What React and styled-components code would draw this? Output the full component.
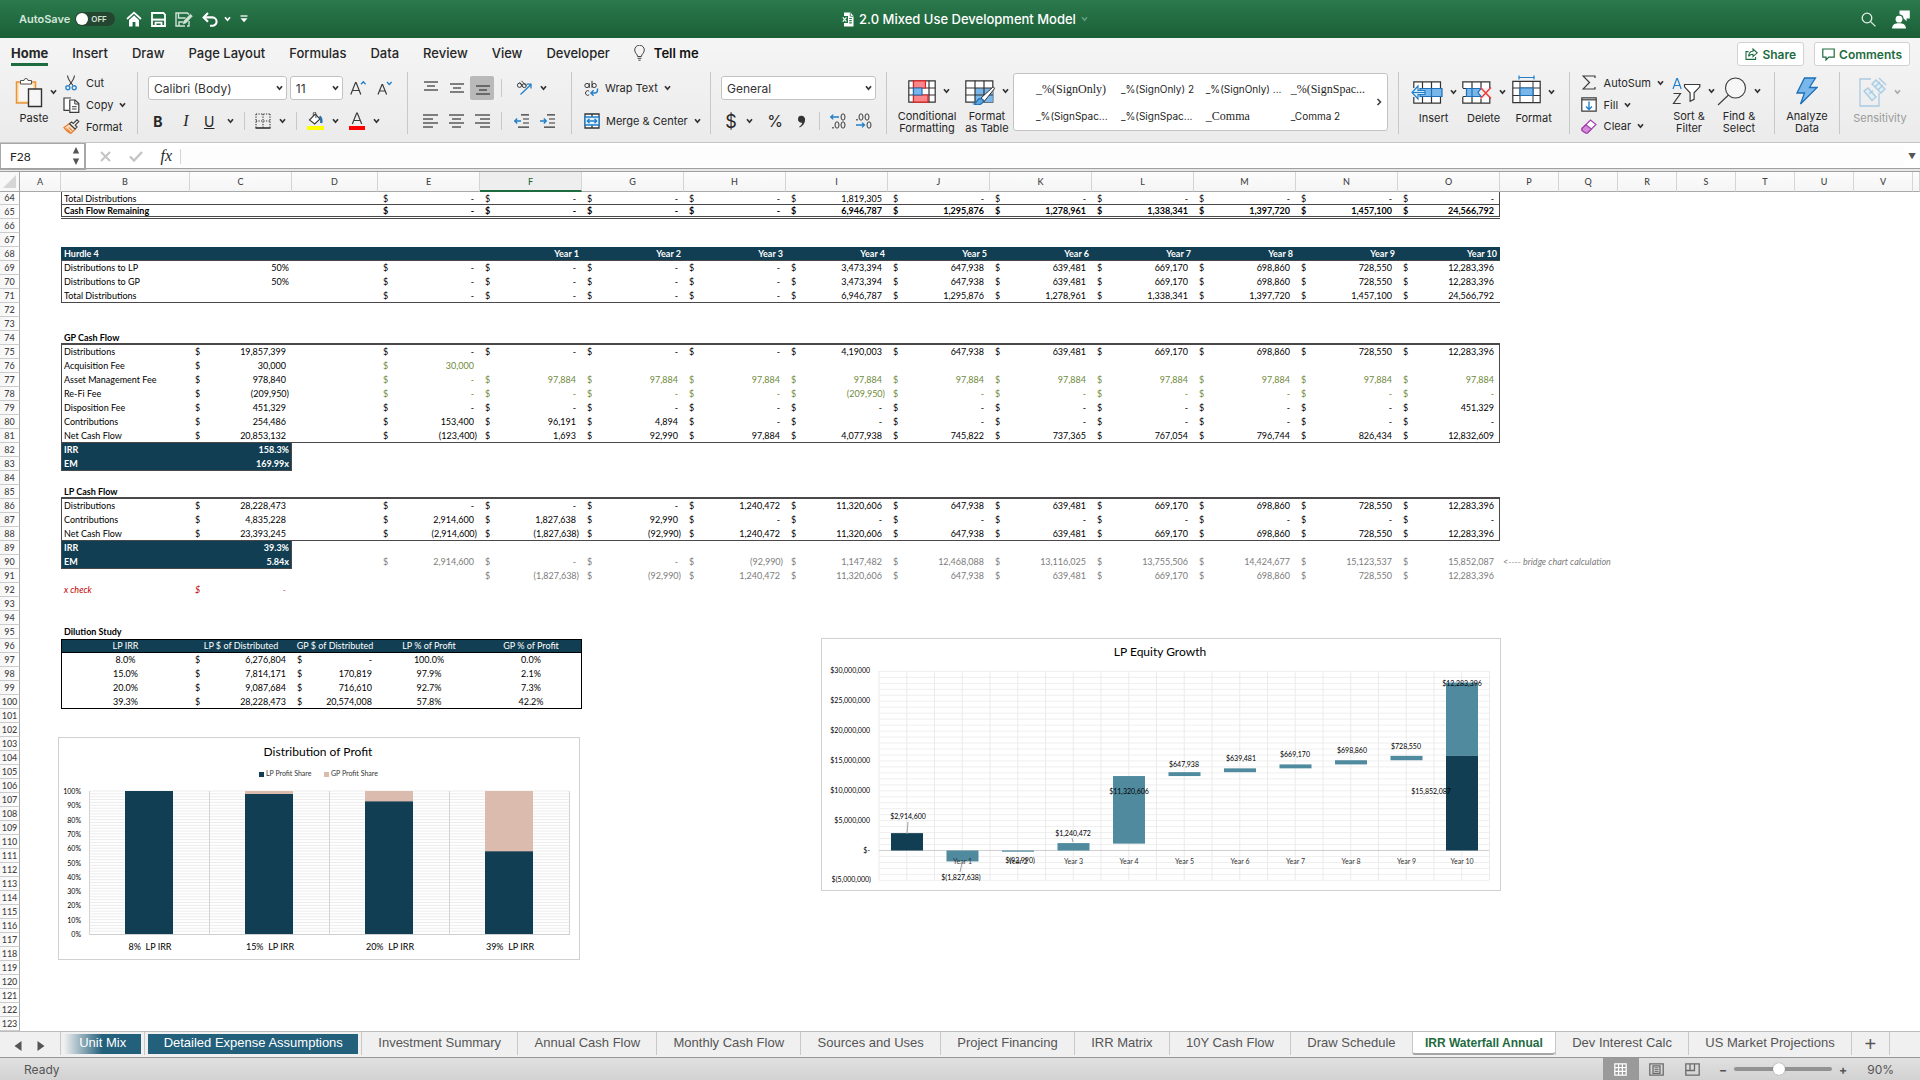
import { Fragment } from 'react';
import styled, { createGlobalStyle, css } from 'styled-components';

const NAVY = '#113e52';
const TEAL = '#4f8a9e';
const ROSE = '#dbbbae';
const GREEN = '#1e6b3f';
const LINE = '#4a4848';

const GlobalStyle = createGlobalStyle`
	* {
		box-sizing: border-box;
	}
	body {
		margin: 0;
		background: #ffffff;
		font-family: Inter, 'Liberation Sans', sans-serif;
		color: #262626;
	}
	button, input, select {
		font: inherit;
		color: inherit;
		margin: 0;
	}
	button {
		padding: 0;
		border: 0;
		background: none;
	}
`;

/* ---------- icons ---------- */

const Svg = ({ w, h, children, ...rest }) => (
	<svg
		width={w}
		height={h}
		viewBox={`0 0 ${w} ${h}`}
		fill="none"
		stroke="#3b3b3b"
		strokeWidth="1.2"
		aria-hidden="true"
		{...rest}
	>
		{children}
	</svg>
);

const Chevron = ({ color = '#333' }) => (
	<Svg w={7} h={6} stroke={color} strokeWidth="1.7">
		<path d="M1 1.2 3.5 4.2 6 1.2" />
	</Svg>
);

const HomeIcon = () => (
	<Svg w={16} h={16} stroke="#fff" strokeWidth="1.8">
		<path d="M1 8 8 1.6 15 8" />
		<path d="M3 9v6.5h3.6V11h2.8v4.5H13V9L8 4.4Z" fill="#fff" stroke="none" />
	</Svg>
);

const SaveIcon = () => (
	<Svg w={15} h={15} stroke="#fff" strokeWidth="1.8">
		<path d="M1 1h11.4L14 2.6V14H1Z" />
		<path d="M1 7.6h13" strokeWidth="2" />
		<path d="M4.5 14v-3.4h6V14" />
	</Svg>
);

const SaveAsIcon = () => (
	<Svg w={18} h={15} stroke="#cfe3d6" strokeWidth="1.4">
		<path d="M10 14H1V1h11.4L14 2.6M14 9v5h-2" />
		<path d="M3.5 1v5h7M4 14v-4h4" />
		<path d="M8 12 9 8.8 15.4 2.2 17.4 4.1 11 10.9Z" fill="#cfe3d6" strokeWidth="0.6" />
	</Svg>
);

const UndoIcon = () => (
	<Svg w={16} h={15} stroke="#fff" strokeWidth="2.1">
		<path d="M6 1 1.6 5.4 6 9.8" />
		<path d="M2 5.4h8.4a4 4 0 0 1 0 8.4H8" />
	</Svg>
);

const CustomizeIcon = () => (
	<Svg w={8} h={8} stroke="#fff" strokeWidth="1.3">
		<path d="M.5 1h7" />
		<path d="M.5 3.2h7L4 7.2Z" fill="#fff" stroke="none" />
	</Svg>
);

const FileIcon = () => (
	<Svg w={13} h={15} stroke="none">
		<path d="M3 .5h6.5L12.5 4v10.5H3Z" fill="#fff" />
		<path d="M9.3.8v3.5h3.2" stroke="#2a7a4d" strokeWidth="0.8" />
		<path d="M0 4h7v7H0Z" fill="#1f7244" />
		<path d="m1.8 5.4 3.6 4.2M5.4 5.4 1.8 9.6" stroke="#fff" strokeWidth="1.1" />
		<path d="M8.2 6.5h2.6M8.2 8.7h2.6M8.2 10.9h2.6" stroke="#2a7a4d" />
	</Svg>
);

const SearchIcon = () => (
	<Svg w={15} h={15} stroke="#e4efe8" strokeWidth="1.3">
		<circle cx="6" cy="6" r="4.8" />
		<path d="m9.6 9.6 4.8 4.8" />
	</Svg>
);

const PresenceIcon = () => (
	<Svg w={18} h={19} stroke="none" fill="#fff">
		<circle cx="7" cy="9.2" r="3.4" />
		<path d="M0 18.5c.4-4 3-5.2 7-5.2s6.6 1.2 7 5.2Z" />
		<path d="M7.5.5h10.3v8h-3.2v2.8l-3-2.8A4.6 4.6 0 0 0 7.5 4.3Z" />
	</Svg>
);

const BulbIcon = () => (
	<Svg w={11} h={16} stroke="#444" strokeWidth="1">
		<path d="M3.6 11.5c0-2.4-2.9-3.2-2.9-6.5a4.8 4.8 0 0 1 9.6 0c0 3.3-2.9 4.1-2.9 6.5Z" />
		<path d="M3.6 13.3h3.8M4.4 15.2h2.2" />
	</Svg>
);

const ShareIcon = () => (
	<Svg w={13} h={12} stroke={GREEN} strokeWidth="1.1">
		<path d="M3.5 3.6H1v7.8h9.6V9" />
		<path d="M8 1v2.3C5 3.3 3.8 5.4 3.6 8.4 4.7 6.6 6 6.2 8 6.2v2.4l4.2-3.8Z" />
	</Svg>
);

const CommentIcon = () => (
	<Svg w={13} h={13} stroke={GREEN} strokeWidth="1.2">
		<path d="M.8 1h11.4v8.2H6.8L4 12V9.2H.8Z" />
	</Svg>
);

const PasteIcon = () => (
	<Svg w={28} h={32}>
		<path d="M1.5 6h19v21h-19Z" fill="#fbe3b4" stroke="#e9923d" strokeWidth="1.5" />
		<path d="M4 8.5h14V25H4Z" fill="#f7f7f7" stroke="none" />
		<path d="M5.5 8V4.5H9a2 2 0 0 1 4 0h3.5V8Z" fill="#fff" stroke="#555" strokeWidth="1" />
		<path d="M13.5 13h13v17.5h-13Z" fill="#f6f6f6" stroke="#333" strokeWidth="1.4" />
	</Svg>
);

const CutIcon = () => (
	<Svg w={12} h={16} strokeWidth="1.1">
		<path d="M2.5.5c.3 3 2.2 6 5.5 10M9.5.5C9.2 3.5 7.3 6.5 4 10.5" />
		<circle cx="2.8" cy="12.8" r="2" stroke="#2f86cb" strokeWidth="1.4" />
		<circle cx="9.2" cy="12.8" r="2" stroke="#2f86cb" strokeWidth="1.4" />
	</Svg>
);

const CopyIcon = () => (
	<Svg w={17} h={16} strokeWidth="1.2">
		<path d="M6 13.3H1V1h7" fill="#fff" />
		<path d="M6.8 3H12l3.8 3.6v8.7h-9Z" fill="#fff" />
		<path d="M11.8 3v4h4M9 9.7h4.6M9 12h4.6" strokeWidth="1" />
	</Svg>
);

const BrushIcon = () => (
	<Svg w={17} h={15}>
		<path d="M1 8.5 6.5 4.7l5.7 5.5L8 14.3C5 13.4 3.5 11.8 1 8.5Z" fill="#fce0c2" stroke="#e8833a" strokeWidth="1.3" />
		<path d="m3.5 9.5 4 4M5.800 8.300l3.600 3.600" stroke="#e8833a" />
		<path d="m6.500 4.700 2-1.700 1.800 1.500L14 .8l1.800 1.700-3.600 3.700 1.800 1.900-1.900 1.900Z" fill="#f5f5f5" stroke="#444" />
	</Svg>
);

const FontGrowIcon = ({ down }) => (
	<Svg w={16} h={16} strokeWidth="1.2">
		{down ? (
			<path d="m1 14.5 4-10h.6l4 10M2.6 11h5.6" />
		) : (
			<path d="M.8 14.5 5.500 2.600h.6l4.700 11.900M2.500 10.500H9" />
		)}
		<path d={down ? 'm10 2 2.300 2.500L14.600 2' : 'M11 4.200 13.300 1.700l2.300 2.500'} stroke="#1f7fcb" strokeWidth="1.3" />
	</Svg>
);

const BordersIcon = () => (
	<Svg w={16} h={16} stroke="#333" strokeWidth="1.1">
		<path d="M1 1h14M1 1v14M15 1v14M8 1v14M1 8h14" strokeDasharray="1.2 1.3" />
		<path d="M.5 15h15" strokeWidth="1.6" />
	</Svg>
);

const FillIcon = () => (
	<Svg w={17} h={18}>
		<path d="m2.500 8 5.800-6 4.700 5-5.300 5Z" fill="#fff" strokeWidth="1.1" />
		<path d="M6.300 4V1.500a1.300 1.300 0 0 1 2.600 0V6" strokeWidth="0.9" />
		<path d="M12.500 4.500c2 1.500 2.200 3.800 1.600 6.500" stroke="#2a6fa8" strokeWidth="2.4" />
		<path d="M0 14h17v4H0Z" fill="#ffff00" stroke="none" />
	</Svg>
);

const FontColorIcon = () => (
	<Svg w={16} h={18}>
		<path d="M3.300 12 7.700 1h.6l4.400 11M5 8.500h6" />
		<path d="M0 14h16v4H0Z" fill="#ff0000" stroke="none" />
	</Svg>
);

// lines: [x1, x2, y] triples
const LinesIcon = ({ lines }) => (
	<Svg w={15} h={14} stroke="#333" strokeWidth="1.2">
		{lines.map(([a, b, y]) => (
			<path key={y} d={`M${a} ${y}H${b}`} />
		))}
	</Svg>
);

const OrientationIcon = () => (
	<Svg w={16} h={16} strokeWidth="1">
		<circle cx="3.5" cy="5.3" r="2.1" />
		<path d="M3.600 2.200 6.400 6.400M5.500.8l4.600 5" />
		<circle cx="8.3" cy="5.6" r="2" />
		<path d="M4.500 14.500 15 4.500M10.800 4.200H15v4.300" stroke="#1f7fcb" strokeWidth="1.3" />
	</Svg>
);

const IndentIcon = ({ right }) => (
	<Svg w={15} h={14} stroke="#333">
		<path d="M7 .8h8M9 5h6M9 9h6M4 13.200h11" />
		<path d={right ? 'M0 7h6M3.800 4.600 6.200 7 3.800 9.400' : 'M7 7H1M3.200 4.600.8 7l2.400 2.400'} stroke="#1f7fcb" strokeWidth="1.4" />
	</Svg>
);

const WrapIcon = () => (
	<Svg w={15} h={17} strokeWidth="1">
		<ellipse cx="3" cy="5.5" rx="2.2" ry="2.1" />
		<path d="M5.300 3.200v4.600M8 .8v7" />
		<ellipse cx="10.2" cy="5.5" rx="2.1" ry="2.1" />
		<path d="M5.200 11.200a2.300 2.300 0 1 0 0 3.600" />
		<path d="M13.500 8.500v1.800c0 1.600-1 2.700-2.700 2.700H7M9.600 10.300 6.900 13l2.700 2.800" stroke="#1f7fcb" strokeWidth="1.4" />
	</Svg>
);

const MergeIcon = () => (
	<Svg w={16} h={16} stroke="#333" strokeWidth="1.3">
		<path d="M1 1h14v14H1ZM8 1v3M8 12v3" fill="#fff" />
		<path d="M1 4h14v8H1Z" fill="#e3f1fb" stroke="#1f7fcb" />
		<path d="M3.500 8h9M5.500 5.800 3.300 8l2.200 2.200M10.500 5.800 12.700 8l-2.200 2.200" stroke="#1f7fcb" />
	</Svg>
);

const CommaIcon = () => (
	<Svg w={9} h={13} stroke="none" fill="#333">
		<path d="M4.500.8a3.500 3.500 0 0 1 3.600 3.800c0 3.600-2 6.600-5.400 7.800l-.4-.8c1.800-1 2.800-2.300 2.900-3.800C2.600 8 1 6.300 1 4.200A3.400 3.400 0 0 1 4.500.8Z" />
	</Svg>
);

const ConditionalIcon = () => (
	<Svg w={28} h={23} stroke="#333" strokeWidth="1.2">
		<path d="M.8.8h26.400v21.400H.8Z" fill="#fff" />
		<path d="M.8 8h26.400M.8 15h26.400M5.500.8v21.400M21 .8v21.400" />
		<path d="M5.500.8h12V8h-12ZM5.500 15H20v7.200H5.500Z" fill="#f9868a" stroke="#d22" />
		<path d="M5.500 8H14v7H5.500Z" fill="#79b7ea" stroke="#1c6fb8" />
	</Svg>
);

const TableFormatIcon = () => (
	<Svg w={30} h={28} stroke="#333" strokeWidth="1.2">
		<path d="M.8 3.800h27v21.400H.8Z" fill="#fff" />
		<path d="M10 11h17.800v14.200H10Z" fill="#79b7ea" stroke="none" />
		<path d="M.8 11h27M.8 18h27M10 3.800v21.400M19 3.800v21.400" />
		<path d="m16 21 11.500-10.500c1.200-.9 2.400.2 1.700 1.500L19.500 24Z" fill="#fff" strokeWidth="1" />
		<path d="M9 27c3-.5 2.500-5 6-5.300 3 .1 4 2.700 2.400 4.200-2 2-5.800 2.200-8.400 1.100Z" fill="#5fa6df" stroke="#1c6fb8" />
	</Svg>
);

const InsertIcon = () => (
	<Svg w={32} h={23} stroke="#333" strokeWidth="1.2">
		<path d="M2.800 7V.8h26.700V7M2.800 16v6.200h26.700V16M11.500.8v21.400M20.500.8v21.400" fill="#fff" />
		<path d="M9 7.500h22v8H9Z" fill="#79b7ea" stroke="#1c6fb8" />
		<path d="M20.500 7.500v8" stroke="#1c6fb8" />
		<path d="M7 5 1 11.500 7 18V13.500h7v-4H7Z" fill="#e3f1fb" stroke="#1f7fcb" strokeWidth="1.2" />
		<path d="M2 11.500h12" stroke="#1f7fcb" />
	</Svg>
);

const DeleteIcon = () => (
	<Svg w={30} h={23} stroke="#333" strokeWidth="1.2">
		<path d="M.8 7V.8h27V7M.8 16v6.200h27V16M10 .8v21.400M19 .8v6M19 18v4.200M.8 7.500h4M.8 15.500h4" fill="#fff" />
		<path d="M4.500 7.500H19l-3 4 3 4H4.500Z" fill="#79b7ea" stroke="#1c6fb8" />
		<path d="M10 7.500v8" stroke="#1c6fb8" />
		<path d="m18.500 6.500 10.500 11M29 6.500l-10.500 11" stroke="#ef3a3a" strokeWidth="1.5" />
	</Svg>
);

const CellFormatIcon = () => (
	<Svg w={29} h={34} stroke="#333" strokeWidth="1.2">
		<path d="M7 2.500h15M7 .5v4M22 .5v4" stroke="#1f7fcb" />
		<path d="M.8 6.300h27.400v21.400H.8Z" fill="#fff" />
		<path d="M.8 13h27.400M.8 20.500h27.400M8 6.300v21.400M21 6.300v21.400" strokeWidth="1" />
		<path d="M8 13h13v7.500H8Z" fill="#79b7ea" stroke="#1c6fb8" />
	</Svg>
);

const SigmaIcon = () => (
	<Svg w={14} h={15}>
		<path d="M13 3V1H1l6.500 6.500L1 14h12v-2" />
	</Svg>
);

const FillDownIcon = () => (
	<Svg w={16} h={15}>
		<path d="M.8.8h14.400v13.400H.8Z" fill="#fff" />
		<path d="M.8 2.800h14.400" />
		<path d="M8 4.500v7.800M5 9.400l3 3 3-3" stroke="#1f7fcb" strokeWidth="1.4" />
	</Svg>
);

const EraserIcon = () => (
	<Svg w={16} h={15} stroke="#a33fae">
		<path d="M1 9.500 9.500 1 15 5.500 6.500 14H4.500L1 11.500Z" fill="#fff" />
		<path d="M1 9.500 4.800 5.800 10.500 10 6.500 14H4.500L1 11.500Z" fill="#d28bd8" />
	</Svg>
);

const SortFilterIcon = () => (
	<Svg w={29} h={28}>
		<path d="M1 12 4.800 1.500h.6L9.200 12M2.300 8.500h5.600" stroke="#1f7fcb" />
		<path d="M1.500 16.500h7L1.500 26.500h7.200" />
		<path d="M12.500 7.500h15.300v2.300l-5.700 6v6.500l-4 2V15.800l-5.600-6Z" fill="#fff" />
	</Svg>
);

const FindIcon = () => (
	<Svg w={30} h={29} strokeWidth="1.1">
		<circle cx="18.5" cy="11" r="10" fill="#f6f6f6" />
		<path d="M11.500 18 1 28" />
	</Svg>
);

const BoltIcon = () => (
	<Svg w={22} h={28} stroke="#1c6fb8" strokeWidth="1.3">
		<path d="M8.500 1h11l-6 9.500h7.700L4.500 27l4-11H1Z" fill="#79b7ea" />
	</Svg>
);

const SensitivityIcon = () => (
	<Svg w={28} h={30} stroke="#a9cbe2" strokeWidth="1.3">
		<path d="M12 2H1v27h19V16" />
		<path d="m5 14 4-3 8 9-4 3.500ZM10 17l4-3.500" fill="#e2edf4" />
		<path d="m13 7 4-4 9 9-4 4ZM16 10l5-5M19 13l5-5M20 1l7 7" fill="#e2edf4" />
	</Svg>
);

const DecimalIcon = ({ right }) => (
	<Svg w={16} h={16} strokeWidth="1">
		{right ? (
			<>
				<circle cx="1" cy="6.8" r=".5" />
				<ellipse cx="5" cy="4" rx="2" ry="3.2" />
				<ellipse cx="11" cy="4" rx="2" ry="3.2" />
				<ellipse cx="13" cy="12" rx="2" ry="3.2" />
				<path d="M0 12h8.500M6 9.600 8.500 12 6 14.400" stroke="#1f7fcb" strokeWidth="1.3" />
			</>
		) : (
			<>
				<ellipse cx="13" cy="4" rx="2" ry="3.2" />
				<circle cx="3" cy="14.8" r=".5" />
				<ellipse cx="7" cy="12" rx="2" ry="3.2" />
				<ellipse cx="13" cy="12" rx="2" ry="3.2" />
				<path d="M9 4H.8M3.300 1.600.8 4l2.500 2.400" stroke="#1f7fcb" strokeWidth="1.3" />
			</>
		)}
	</Svg>
);

const GridViewIcon = () => (
	<Svg w={13} h={13} stroke="#fff">
		<path d="M.8.8h11.400v11.400H.8ZM4.600.8v11.400M8.400.8v11.400M.8 4.600h11.400M.8 8.400h11.400" />
	</Svg>
);

const PageViewIcon = () => (
	<Svg w={15} h={13} stroke="#6a6a6a" strokeWidth="1.3">
		<path d="M.8.8h13.400v11.400H.8ZM4 2.800h7v7.600H4Z" />
		<path d="M5.500 4.800h4M5.500 6.600h4M5.500 8.400h4" strokeWidth="1" />
	</Svg>
);

const BreakViewIcon = () => (
	<Svg w={15} h={13} stroke="#6a6a6a" strokeWidth="1.3">
		<path d="M.8.8h13.400v11.400H.8ZM.8 7.500h8.700V.8M5 .8v6.700" />
	</Svg>
);

/* ---------- title bar ---------- */

const TitleBar = styled.header`
	display: grid;
	grid-template-columns: 1fr auto 1fr;
	align-items: center;
	height: 38px;
	padding: 0 10px 0 19px;
	background: linear-gradient(#2b794d, #1b5f37);
	color: #ffffff;
`;

const QuickAccess = styled.div`
	display: flex;
	align-items: center;
	gap: 9px;
`;

const AutoSave = styled.label`
	display: flex;
	align-items: center;
	gap: 5px;
	margin-right: 2px;
	font-size: 11px;
	font-weight: 600;
	color: #d5e6db;
`;

const Toggle = styled.span`
	display: flex;
	align-items: center;
	gap: 3px;
	width: 40px;
	height: 14px;
	padding: 0 1px;
	border-radius: 7px;
	background: #24452f;
	font-size: 8px;
	color: #d5e6db;

	& input {
		appearance: none;
		width: 12px;
		height: 12px;
		border-radius: 6px;
		background: #ffffff;
	}
`;

const QuickButton = styled.button`
	display: flex;
	align-items: center;
	gap: 6px;
`;

const DocTitle = styled.h1`
	display: flex;
	align-items: center;
	gap: 5px;
	margin: 0;
	font-size: 13px;
	font-weight: 500;
`;

const TitleActions = styled.div`
	display: flex;
	justify-content: flex-end;
	align-items: center;
	gap: 16px;
`;

/* ---------- ribbon ---------- */

const RibbonPanel = styled.div`
	height: 105px;
	background: linear-gradient(#f5f5f5, #ebebeb);
	border-bottom: 1px solid #c4c4c4;
`;

const TabRow = styled.nav`
	display: flex;
	align-items: center;
	gap: 24px;
	height: 32px;
	padding: 0 10px 0 11px;
`;

const RibbonTab = styled.button`
	height: 24px;
	padding-top: 1px;
	border-bottom: 3px solid ${({ $active }) => ($active ? GREEN : 'transparent')};
	font-size: 13px;
	line-height: 16px;
	font-weight: ${({ $active }) => ($active ? 700 : 500)};
`;

const TellMe = styled.button`
	display: flex;
	align-items: center;
	gap: 9px;
	height: 24px;
	padding-bottom: 2px;
	font-size: 13px;
	font-weight: 600;
	color: #111111;
`;

const TabActions = styled.div`
	display: flex;
	gap: 10px;
	margin-left: auto;
`;

const ShareButton = styled.button`
	display: flex;
	align-items: center;
	gap: 4px;
	height: 24px;
	padding: 0 7px;
	border: 1px solid #d2d2d2;
	border-radius: 3px;
	background: #ffffff;
	font-size: 12px;
	font-weight: 600;
	color: ${GREEN};
`;

const Groups = styled.div`
	display: flex;
	height: 72px;
	padding-top: 2px;
`;

const Group = styled.div`
	display: flex;
	flex-shrink: 0;
	height: 62px;
	padding: 0 ${({ $pad = 10 }) => $pad}px;
	border-right: 1px solid #c8c8c8;

	&:last-child {
		border-right: 0;
	}
`;

const Stack = styled.div`
	display: flex;
	flex-direction: column;
	justify-content: space-between;
	width: ${({ $width }) => $width}px;
	padding: 4px 0 1px;
`;

const ToolRow = styled.div`
	display: flex;
	align-items: center;
	gap: ${({ $gap = 10 }) => $gap}px;
	height: 24px;
`;

const Tool = styled.button`
	display: flex;
	align-items: center;
	justify-content: center;
	gap: ${({ $gap = 0 }) => $gap}px;
	flex-shrink: 0;
	min-width: ${({ $min = 16 }) => $min}px;
	height: 24px;
	border-radius: 2px;
	background: ${({ $on }) => ($on ? '#b9b9b9' : 'transparent')};
	font-size: 11px;
	white-space: nowrap;
`;

const Glyph = styled.span`
	font-size: ${({ $size = 14 }) => $size}px;
	font-family: ${({ $font = 'inherit' }) => $font};
	font-weight: ${({ $weight = 400 }) => $weight};
	font-style: ${({ $italic }) => ($italic ? 'italic' : 'normal')};
	text-decoration: ${({ $underline }) => ($underline ? 'underline' : 'none')};
`;

const Rule = styled.span`
	width: 1px;
	height: 18px;
	margin: 0 ${({ $space = 0 }) => $space}px;
	background: #c8c8c8;
`;

const SmallTools = styled.div`
	display: flex;
	flex-direction: column;
	align-items: flex-start;
	gap: 6px;
	min-width: ${({ $width = 0 }) => $width}px;
	padding-top: 3px;
`;

const SmallTool = styled.button`
	display: grid;
	grid-template-columns: 18px auto auto;
	align-items: center;
	justify-items: start;
	column-gap: 6px;
	height: 16px;
	font-size: 11px;

	& > svg:first-child {
		justify-self: center;
	}
`;

const BigTool = styled.button`
	display: flex;
	flex-direction: column;
	align-items: center;
	width: ${({ $width }) => $width}px;
	font-size: 11px;
	line-height: 12px;
	white-space: nowrap;
	color: ${({ $muted }) => ($muted ? '#9b9b9b' : 'inherit')};
`;

const BigIcon = styled.span`
	display: flex;
	align-items: center;
	justify-content: center;
	gap: 7px;
	height: 40px;
	padding-left: ${({ $shift = 0 }) => $shift}px;
`;

const SelectBox = styled.span`
	position: relative;
	width: ${({ $width }) => $width}px;
	height: 24px;

	& select {
		appearance: none;
		width: 100%;
		height: 24px;
		padding: 0 5px;
		border: 1px solid #c3c3c3;
		border-radius: 3px;
		background: #ffffff;
		font-size: 12px;
		color: #333333;
	}
	& svg {
		position: absolute;
		right: 4px;
		top: 9px;
		pointer-events: none;
	}
`;

const Gallery = styled.div`
	display: flex;
	align-items: center;
	flex: 1;
	height: 58px;
	margin: 1px 10px 0 4px;
	padding: 0 5px 0 22px;
	border: 1px solid #c3c3c3;
	border-radius: 3px;
	background: #ffffff;
`;

const GalleryGrid = styled.div`
	display: grid;
	grid-template-columns: repeat(4, 1fr);
	row-gap: 11px;
	flex: 1;
`;

const StyleName = styled.button`
	text-align: left;
	white-space: nowrap;
	line-height: 16px;
	font-family: ${({ $serif }) => ($serif ? "'Liberation Serif', serif" : 'inherit')};
	font-size: ${({ $serif }) => ($serif ? 12 : 10)}px;
`;

const StylesGroup = styled.div`
	display: flex;
	flex: 1;
	height: 62px;
	padding-left: 2px;
	border-right: 1px solid #c8c8c8;
`;

/* ---------- formula bar ---------- */

const FormulaBar = styled.div`
	display: flex;
	align-items: center;
	height: 29px;
	padding-bottom: 2px;
	background: #ffffff;
	border-bottom: 1px solid #a0a0a0;
	box-shadow: inset 0 -2px 0 #e8e8e8, inset 0 -3px 0 #a0a0a0;
`;

const NameBox = styled.div`
	display: flex;
	align-items: center;
	width: 86px;
	height: 27px;
	padding-right: 4px;
	border: 1px solid #a8a8a8;
	border-right-width: 2px;

	& input {
		flex: 1;
		min-width: 0;
		border: 0;
		padding: 0 0 0 9px;
		background: none;
		font-family: Lato, sans-serif;
		font-size: 12px;
		color: #222222;
	}
`;

const FormulaTools = styled.div`
	display: flex;
	align-items: center;
	justify-content: space-between;
	width: 95px;
	height: 15px;
	padding: 0 8px 0 14px;
	border-right: 1px solid #d5d5d5;
`;

const FormulaInput = styled.input`
	flex: 1;
	height: 22px;
	border: 0;
	background: #fdfdfd;
`;

const ExpandButton = styled.button`
	width: 16px;
	font-size: 8px;
	color: #555555;
`;

/* ---------- sheet ---------- */

const SheetArea = styled.main`
	position: relative;
	flex: 1;
	overflow: hidden;
	background: #ffffff;
`;

const Grid = styled.table`
	table-layout: fixed;
	width: 100%;
	border-collapse: separate;
	border-spacing: 0;
	font-family: Lato, Carlito, sans-serif;
	font-size: 9px;
	color: #000000;
`;

const Corner = styled.td`
	padding: 0 2px 2px 3px;
	vertical-align: bottom;
	background: #f8f8f8;
	border-right: 1px solid #a9a9a9;
	border-bottom: 1px solid #a9a9a9;

	& svg {
		display: block;
	}
`;

const ColumnHead = styled.th`
	height: 20px;
	padding: 0;
	line-height: 17px;
	font-weight: 500;
	color: ${({ $active }) => ($active ? GREEN : '#444444')};
	background: ${({ $active }) => ($active ? '#eeeeee' : 'linear-gradient(#fcfcfc, #f5f5f5)')};
	border-right: 1px solid #d5d5d5;
	border-bottom: ${({ $active }) => ($active ? `2px solid ${GREEN}` : '1px solid #a9a9a9')};
`;

const RowHead = styled.th`
	padding: 0;
	line-height: 12px;
	font-weight: 500;
	text-align: center;
	color: #444444;
	background: linear-gradient(90deg, #f6f6f6, #ffffff);
	border-right: 1px solid #a9a9a9;
	border-bottom: 1px solid #cccccc;
`;

const tones = { olive: '#6f8a3c', grey: '#7c7c7c', red: '#c00000', white: '#ffffff' };

const edgeShadow = ($edges = '', $color = LINE) => {
	const parts = [];
	if ($edges.includes('l')) parts.push(`inset 1px 0 0 ${$color}`);
	if ($edges.includes('r')) parts.push(`inset -1px 0 0 ${$color}`);
	if ($edges.includes('t')) parts.push(`inset 0 1px 0 ${$color}`);
	if ($edges.includes('b')) parts.push(`inset 0 -1px 0 ${$color}`);
	if ($edges.includes('B')) parts.push(`inset 0 -2px 0 ${$color}`);
	return parts.join(', ') || 'none';
};

const Cell = styled.td`
	height: ${({ $short }) => ($short ? 13 : 14)}px;
	padding: 0 3px;
	line-height: 12px;
	white-space: nowrap;
	text-align: ${({ $align = 'left' }) => $align};
	color: ${({ $tone }) => tones[$tone] || 'inherit'};
	font-weight: ${({ $bold }) => ($bold ? 700 : 400)};
	font-style: ${({ $italic }) => ($italic ? 'italic' : 'normal')};
	background: ${({ $filled }) => ($filled ? NAVY : 'transparent')};
	box-shadow: ${({ $edges, $edgeColor }) => edgeShadow($edges, $edgeColor)};
	${({ $double }) =>
		$double &&
		css`
			line-height: 11px;
			border-bottom: 3px double ${LINE};
		`}
`;

const Money = styled.span`
	display: flex;
	justify-content: space-between;
	padding: 0 ${({ $negative }) => ($negative ? 0 : 3)}px 0 2px;
`;

const FloatingChart = styled.figure`
	position: absolute;
	left: ${({ $left }) => $left}px;
	top: ${({ $top }) => $top}px;
	margin: 0;
	border: 1px solid #d0d0d0;
	background: #ffffff;

	& svg {
		display: block;
		font-family: Lato, Carlito, sans-serif;
	}
`;

/* ---------- sheet data ---------- */

const D = '-';
const dashes = (n) => Array(n).fill(D);
const letters = 'ABCDEFGHIJKLMNOPQRSTUV'.split('');
const widths = [41, 129, 102, 86, ...Array(11).fill(102), ...Array(7).fill(59)];

const half = ['647,938', '639,481', '669,170', '698,860', '728,550', '12,283,396'];
const full = ['1,295,876', '1,278,961', '1,338,341', '1,397,720', '1,457,100', '24,566,792'];

const rows = {
	64: { label: 'Total Distributions', years: [...dashes(4), '1,819,305', ...dashes(6)], box: 'lrb' },
	65: { label: 'Cash Flow Remaining', bold: true, double: true, years: [...dashes(4), '6,946,787', ...full], box: 'lr' },
	68: { label: 'Hurdle 4', bold: true, filled: true, years: ['', ...Array.from({ length: 10 }, (_, i) => `Year ${i + 1}`)], box: 'b' },
	69: { label: 'Distributions to LP', total: '50%', years: [...dashes(4), '3,473,394', ...half], box: 'l' },
	70: { label: 'Distributions to GP', total: '50%', years: [...dashes(4), '3,473,394', ...half], box: 'l' },
	71: { label: 'Total Distributions', years: [...dashes(4), '6,946,787', ...full], box: 'lb' },
	74: { label: 'GP Cash Flow', bold: true, years: [], box: 'B' },
	75: { label: 'Distributions', total: '19,857,399', years: [...dashes(4), '4,190,003', ...half], box: 'lr' },
	76: { label: 'Acquisition Fee', total: '30,000', tone: 'olive', years: ['30,000'], box: 'lr' },
	77: { label: 'Asset Management Fee', total: '978,840', tone: 'olive', years: [D, ...Array(10).fill('97,884')], box: 'lr' },
	78: { label: 'Re-Fi Fee', total: '(209,950)', tone: 'olive', years: [...dashes(4), '(209,950)', ...dashes(6)], box: 'lr' },
	79: { label: 'Disposition Fee', total: '451,329', years: [...dashes(10), '451,329'], box: 'lr' },
	80: { label: 'Contributions', total: '254,486', years: ['153,400', '96,191', '4,894', ...dashes(8)], box: 'lr' },
	81: {
		label: 'Net Cash Flow',
		total: '20,853,132',
		years: ['(123,400)', '1,693', '92,990', '97,884', '4,077,938', '745,822', '737,365', '767,054', '796,744', '826,434', '12,832,609'],
		box: 'lrb',
	},
	82: { label: 'IRR', total: '158.3%', metric: true },
	83: { label: 'EM', total: '169.99x', metric: true, box: 'b' },
	85: { label: 'LP Cash Flow', bold: true, years: [], box: 'B' },
	86: { label: 'Distributions', total: '28,228,473', years: [...dashes(3), '1,240,472', '11,320,606', ...half], box: 'lr' },
	87: { label: 'Contributions', total: '4,835,228', years: ['2,914,600', '1,827,638', '92,990', ...dashes(8)], box: 'lr' },
	88: {
		label: 'Net Cash Flow',
		total: '23,393,245',
		years: ['(2,914,600)', '(1,827,638)', '(92,990)', '1,240,472', '11,320,606', ...half],
		box: 'lrb',
	},
	89: { label: 'IRR', total: '39.3%', metric: true },
	90: {
		label: 'EM',
		total: '5.84x',
		metric: true,
		box: 'b',
		tone: 'grey',
		years: ['2,914,600', D, D, '(92,990)', '1,147,482', '12,468,088', '13,116,025', '13,755,506', '14,424,677', '15,123,537', '15,852,087'],
		note: '<---- bridge chart calculation',
	},
	91: { tone: 'grey', years: ['', '(1,827,638)', '(92,990)', '1,240,472', '11,320,606', ...half] },
	92: { label: 'x check', total: D, warn: true },
	95: { label: 'Dilution Study', bold: true },
};

const dilution = {
	96: ['LP IRR', 'LP $ of Distributed', 'GP $ of Distributed', 'LP % of Profit', 'GP % of Profit'],
	97: ['8.0%', '6,276,804', D, '100.0%', '0.0%'],
	98: ['15.0%', '7,814,171', '170,819', '97.9%', '2.1%'],
	99: ['20.0%', '9,087,684', '716,610', '92.7%', '7.3%'],
	100: ['39.3%', '28,228,473', '20,574,008', '57.8%', '42.2%'],
};

const isMoney = (value) => value === D || /^\(?[\d,]+\)?$/.test(value);

const ValueCell = ({ value, ...rest }) => {
	if (!value || !isMoney(value)) {
		return (
			<Cell $align="right" {...rest}>
				{value}
			</Cell>
		);
	}
	return (
		<Cell {...rest}>
			<Money $negative={value.startsWith('(')}>
				<span>$</span>
				<span>{value}</span>
			</Money>
		</Cell>
	);
};

const only = (edges = '', allowed) => edges.split('').filter((e) => allowed.includes(e)).join('');

const BlankCells = ({ count, ...rest }) =>
	Array.from({ length: count }, (_, i) => <Cell key={i} {...rest} />);

const DilutionCells = ({ n }) => {
	const head = n === 96;
	const bottom = head || n === 100 ? 'b' : '';
	const common = { $filled: head, $tone: head ? 'white' : undefined, $edgeColor: '#000' };
	return (
		<>
			<Cell />
			{dilution[n].map((value, i) => {
				const edges = bottom + (i === 0 ? 'l' : '') + (i === 4 ? 'r' : '') + (head ? 't' : '');
				if (!head && (i === 1 || i === 2)) {
					return <ValueCell key={i} value={value} $edges={edges} {...common} />;
				}
				return (
					<Cell key={i} $align="center" $edges={edges} {...common}>
						{value}
					</Cell>
				);
			})}
			<BlankCells count={17} />
		</>
	);
};

const ModelCells = ({ n, row }) => {
	const { label, total, years = [], tone, bold, filled, metric, warn, double, box = '', note } = row;
	const short = n === 64;
	const inner = only(box, 'bB');
	const shared = { $short: short, $double: double, $bold: bold || metric };
	const head = {
		...shared,
		$filled: filled || metric,
		$tone: filled || metric ? 'white' : warn ? 'red' : undefined,
		$italic: warn,
	};
	return (
		<>
			<Cell $short={short} />
			<Cell {...head} $edges={metric ? `l${inner}` : only(box, 'lbB')}>
				{label}
			</Cell>
			<ValueCell {...head} value={total} $edges={metric ? `r${inner}` : inner} />
			{Array.from({ length: 12 }, (_, i) => (
				<ValueCell
					key={i}
					value={i === 0 ? '' : years[i - 1]}
					$short={short}
					$double={double}
					$bold={bold}
					$filled={filled}
					$tone={filled ? 'white' : tone}
					$edges={metric ? '' : i === 11 ? only(box, 'rbB') : inner}
				/>
			))}
			<Cell $short={short} $italic $tone="grey">
				{note}
			</Cell>
			<BlankCells count={7} $short={short} />
		</>
	);
};

const SheetGrid = () => (
	<Grid>
		<colgroup>
			<col width="20" />
			{widths.map((w, i) => (
				<col key={i} width={w} />
			))}
			<col />
		</colgroup>
		<thead>
			<tr>
				<Corner>
					<Svg w={14} h={14} stroke="none" fill="#d6d6d6">
						<path d="M13 0v13H0Z" />
					</Svg>
				</Corner>
				{letters.map((l) => (
					<ColumnHead key={l} scope="col" $active={l === 'F'}>
						{l}
					</ColumnHead>
				))}
				<ColumnHead />
			</tr>
		</thead>
		<tbody>
			{Array.from({ length: 60 }, (_, i) => i + 64).map((n) => (
				<tr key={n}>
					<RowHead scope="row">{n}</RowHead>
					{dilution[n] && <DilutionCells n={n} />}
					{rows[n] && <ModelCells n={n} row={rows[n]} />}
					{!dilution[n] && !rows[n] && <BlankCells count={23} />}
				</tr>
			))}
		</tbody>
	</Grid>
);

/* ---------- charts ---------- */

const profit = [
	['8%  LP IRR', 100],
	['15%  LP IRR', 97.9],
	['20%  LP IRR', 92.7],
	['39%  LP IRR', 57.8],
];

const ProfitChart = () => {
	const y = (pct) => 196 - pct * 1.43;
	return (
		<FloatingChart $left={58} $top={565}>
			<svg width="520" height="221" role="img" aria-label="Distribution of Profit">
				<text x="259" y="18" fontSize="12" textAnchor="middle">
					Distribution of Profit
				</text>
				<rect x="200" y="34" width="5" height="5" fill={NAVY} />
				<text x="207" y="38" fontSize="7" fill="#333">
					LP Profit Share
				</text>
				<rect x="265" y="34" width="5" height="5" fill={ROSE} />
				<text x="272" y="38" fontSize="7" fill="#333">
					GP Profit Share
				</text>
				{Array.from({ length: 50 }, (_, i) => (
					<path key={i} d={`M31 ${y(i * 2 + 2)}H510`} stroke="#ececec" />
				))}
				{[30.5, 150.5, 270.5, 390.5, 510.5].map((x) => (
					<path key={x} d={`M${x} 53V196`} stroke="#d4d4d4" />
				))}
				{Array.from({ length: 11 }, (_, i) => (
					<text key={i} x="22" y={y(i * 10) + 3} fontSize="7" textAnchor="end">
						{i * 10}%
					</text>
				))}
				{profit.map(([name, lp], i) => (
					<Fragment key={name}>
						<rect x={66 + i * 120} y={53} width="48" height="143" fill={ROSE} />
						<rect x={66 + i * 120} y={y(lp)} width="48" height={lp * 1.43} fill={NAVY} />
						<text x={91 + i * 120} y="212" fontSize="9" textAnchor="middle" xmlSpace="preserve">
							{name}
						</text>
					</Fragment>
				))}
				<path d="M30 196.5H511" stroke="#cfcfcf" />
			</svg>
		</FloatingChart>
	);
};

// from / to in millions
const bridge = [
	{ from: 0, to: 2.91, dark: true, text: '$2,914,600', tx: 86, ty: 180 },
	{ from: -1.83, to: 0, text: '$(1,827,638)', tx: 139, ty: 241 },
	{ from: -0.2, to: 0, text: '$(92,990)', tx: 198, ty: 224 },
	{ from: 0, to: 1.24, text: '$1,240,472', tx: 251, ty: 197 },
	{ from: 1.15, to: 12.47, text: '$11,320,606', tx: 307, ty: 155 },
	{ from: 12.47, to: 13.12, text: '$647,938', tx: 362, ty: 128 },
	{ from: 13.12, to: 13.76, text: '$639,481', tx: 419, ty: 122 },
	{ from: 13.76, to: 14.42, text: '$669,170', tx: 473, ty: 118 },
	{ from: 14.42, to: 15.12, text: '$698,860', tx: 530, ty: 114 },
	{ from: 15.12, to: 15.85, text: '$728,550', tx: 584, ty: 110 },
	{ from: 15.85, to: 28.13, text: '$12,283,396', tx: 640, ty: 47 },
];

const axis = ['$(5,000,000)', '$-', '$5,000,000', '$10,000,000', '$15,000,000', '$20,000,000', '$25,000,000', '$30,000,000'];

const EquityChart = () => {
	const y = (m) => 211.5 - m * 5.97;
	const step = 55.5;
	return (
		<FloatingChart $left={821} $top={466}>
			<svg width="678" height="251" role="img" aria-label="LP Equity Growth">
				<text x="338" y="17" fontSize="12" textAnchor="middle">
					LP Equity Growth
				</text>
				{Array.from({ length: 36 }, (_, i) => (
					<path key={i} d={`M57 ${y(i - 5)}H667`} stroke="#efefef" />
				))}
				{Array.from({ length: 23 }, (_, i) => (
					<path key={i} d={`M${57 + (i * step) / 2} 32V241`} stroke="#ebebeb" />
				))}
				{axis.map((t, i) => (
					<text key={t} x={i === 0 ? 49 : 48} y={y(i * 5 - 5) + 2} fontSize="7" textAnchor="end">
						{t}
					</text>
				))}
				<path d="M57 211.5H667" stroke="#cfcfcf" />
				{bridge.map((b, i) => (
					<rect
						key={b.text}
						x={69 + i * step}
						y={y(b.to)}
						width="32"
						height={(b.to - b.from) * 5.97}
						fill={b.dark ? NAVY : TEAL}
					/>
				))}
				<rect x={69 + 10 * step} y={y(15.85)} width="32" height={15.85 * 5.97} fill={NAVY} />
				{bridge.slice(1).map((b, i) => (
					<text key={i} x={85 + (i + 1) * step} y="225" fontSize="7" fill="#333" textAnchor="middle">
						Year {i + 1}
					</text>
				))}
				<path d="M86 183 85 195M140 224 138 233M250 199 251 203" stroke="#a0a0a0" />
				{bridge.map((b) => (
					<text key={b.text} x={b.tx} y={b.ty} fontSize="7" textAnchor="middle">
						{b.text}
					</text>
				))}
				<text x="609" y="155" fontSize="7" textAnchor="middle">
					$15,852,087
				</text>
			</svg>
		</FloatingChart>
	);
};

/* ---------- bottom bars ---------- */

const SheetBar = styled.nav`
	display: flex;
	height: 26px;
	padding: 0 30px 0 0;
	background: #f0f0f0;
	border-top: 1px solid #bdbdbd;
	font-family: 'Liberation Sans', sans-serif;
	font-size: 13px;
	color: #555555;
`;

const NavArrows = styled.div`
	display: flex;
	align-items: center;
	gap: 15px;
	width: 60px;
	padding: 2px 0 0 14px;
`;

const SheetTab = styled.button`
	flex: 1 1 auto;
	height: 23px;
	padding: 0 14px 2px;
	border-left: 1px solid #c8c8c8;
	white-space: nowrap;
	${({ $kind }) =>
		$kind === 'active' &&
		css`
			padding: 0 10px;
			background: #ffffff;
			border-bottom: 2px solid #a5a5a5;
			border-radius: 0 0 3px 3px;
			color: ${GREEN};
			font-size: 12px;
			font-weight: 700;
		`}
	${({ $kind }) =>
		($kind === 'color' || $kind === 'fade') &&
		css`
			padding: 0 3px;
		`}
`;

const ColorTab = styled.span`
	display: block;
	height: 20px;
	padding: 0 13px;
	line-height: 18px;
	color: #ffffff;
	background: ${({ $fade }) => ($fade ? 'linear-gradient(90deg, #f0f0f0, #23607b 50%)' : '#23607b')};
`;

const AddTab = styled.button`
	width: 39px;
	height: 23px;
	border: 1px solid #c8c8c8;
	border-width: 0 1px;
	font-size: 20px;
	line-height: 20px;
`;

const StatusBar = styled.footer`
	display: flex;
	align-items: center;
	height: 23px;
	padding: 0 26px 0 24px;
	border-top: 1px solid #969696;
	background: linear-gradient(#e0e0e0, #d2d2d2);
	font-size: 12px;
	color: #555555;
`;

const StatusText = styled.span`
	margin-right: auto;
`;

const ViewButton = styled.button`
	display: flex;
	align-items: center;
	justify-content: center;
	width: 36px;
	height: 22px;
	background: ${({ $on }) => ($on ? '#9a9a9a' : 'transparent')};
`;

const Zoom = styled.div`
	display: flex;
	align-items: center;
	gap: 7px;
	margin-left: 8px;
	font-weight: 700;

	& input {
		appearance: none;
		width: 98px;
		height: 4px;
		border-radius: 2px;
		background: #929292;
	}
	& input::-webkit-slider-thumb {
		appearance: none;
		width: 12px;
		height: 12px;
		border-radius: 6px;
		background: #ffffff;
		box-shadow: 0 0 1px #666666;
	}
`;

const ZoomValue = styled.span`
	margin-left: 20px;
`;

const Page = styled.div`
	display: flex;
	flex-direction: column;
	min-height: 100vh;
	overflow: hidden;
`;

const ribbonTabs = ['Home', 'Insert', 'Draw', 'Page Layout', 'Formulas', 'Data', 'Review', 'View', 'Developer'];

const cellStyles = [
	['_%(SignOnly)', true],
	['_%(SignOnly) 2', false],
	['_%(SignOnly) ...', false],
	['_%(SignSpac...', true],
	['_%(SignSpac...', false],
	['_%(SignSpac...', false],
	['_Comma', true],
	['_Comma 2', false],
];

const sheetTabs = [
	['Unit Mix', 'fade'],
	['Detailed Expense Assumptions', 'color'],
	['Investment Summary'],
	['Annual Cash Flow'],
	['Monthly Cash Flow'],
	['Sources and Uses'],
	['Project Financing'],
	['IRR Matrix'],
	['10Y Cash Flow'],
	['Draw Schedule'],
	['IRR Waterfall Annual', 'active'],
	['Dev Interest Calc'],
	['US Market Projections'],
];

const valign = {
	top: [[1, 15, 1], [4, 12, 5], [1, 15, 9]],
	middle: [[1, 15, 3], [4, 12, 7], [1, 15, 11]],
	bottom: [[1, 15, 5], [4, 12, 9], [1, 15, 13]],
};
const halign = {
	left: [[0, 15, 1], [0, 10, 5], [0, 15, 9], [0, 10, 13]],
	center: [[0, 15, 1], [3, 12, 5], [0, 15, 9], [3, 12, 13]],
	right: [[0, 15, 1], [5, 15, 5], [0, 15, 9], [5, 15, 13]],
};

const Ribbon = () => (
	<RibbonPanel>
		<TabRow>
			{ribbonTabs.map((t) => (
				<RibbonTab key={t} $active={t === 'Home'}>
					{t}
				</RibbonTab>
			))}
			<TellMe>
				<BulbIcon />
				Tell me
			</TellMe>
			<TabActions>
				<ShareButton>
					<ShareIcon />
					Share
				</ShareButton>
				<ShareButton>
					<CommentIcon />
					Comments
				</ShareButton>
			</TabActions>
		</TabRow>
		<Groups>
			<Group $pad={6}>
				<BigTool $width={56}>
					<BigIcon $shift={4}>
						<PasteIcon />
						<Chevron />
					</BigIcon>
					Paste
				</BigTool>
				<SmallTools $width={69}>
					<SmallTool>
						<CutIcon />
						Cut
					</SmallTool>
					<SmallTool>
						<CopyIcon />
						Copy
						<Chevron />
					</SmallTool>
					<SmallTool>
						<BrushIcon />
						Format
					</SmallTool>
				</SmallTools>
			</Group>
			<Group>
				<Stack $width={249}>
					<ToolRow $gap={3}>
						<SelectBox $width={141}>
							<select aria-label="Font">
								<option>Calibri (Body)</option>
							</select>
							<Chevron />
						</SelectBox>
						<SelectBox $width={54}>
							<select aria-label="Font size">
								<option>11</option>
							</select>
							<Chevron />
						</SelectBox>
						<Tool aria-label="Increase font size" $min={24}>
							<FontGrowIcon />
						</Tool>
						<Tool aria-label="Decrease font size" $min={24}>
							<FontGrowIcon down />
						</Tool>
					</ToolRow>
					<ToolRow>
						<Tool aria-label="Bold" $min={20}>
							<Glyph $weight={700}>B</Glyph>
						</Tool>
						<Tool aria-label="Italic">
							<Glyph $italic $size={16} $font="'Liberation Serif', serif">
								I
							</Glyph>
						</Tool>
						<Tool aria-label="Underline" $gap={13}>
							<Glyph $underline>U</Glyph>
							<Chevron />
						</Tool>
						<Rule />
						<Tool aria-label="Borders" $gap={8}>
							<BordersIcon />
							<Chevron />
						</Tool>
						<Rule />
						<Tool aria-label="Fill color" $gap={8}>
							<FillIcon />
							<Chevron />
						</Tool>
						<Tool aria-label="Font color" $gap={8}>
							<FontColorIcon />
							<Chevron />
						</Tool>
					</ToolRow>
				</Stack>
			</Group>
			<Group>
				<Stack $width={143}>
					<ToolRow $gap={2}>
						<Tool aria-label="Top align" $min={24}>
							<LinesIcon lines={valign.top} />
						</Tool>
						<Tool aria-label="Middle align" $min={24}>
							<LinesIcon lines={valign.middle} />
						</Tool>
						<Tool aria-label="Bottom align" $min={24} $on>
							<LinesIcon lines={valign.bottom} />
						</Tool>
						<Rule $space={5} />
						<Tool aria-label="Orientation" $min={44} $gap={8}>
							<OrientationIcon />
							<Chevron />
						</Tool>
					</ToolRow>
					<ToolRow $gap={2}>
						<Tool aria-label="Align left" $min={24}>
							<LinesIcon lines={halign.left} />
						</Tool>
						<Tool aria-label="Center" $min={24}>
							<LinesIcon lines={halign.center} />
						</Tool>
						<Tool aria-label="Align right" $min={24}>
							<LinesIcon lines={halign.right} />
						</Tool>
						<Rule $space={5} />
						<Tool aria-label="Decrease indent" $min={24}>
							<IndentIcon />
						</Tool>
						<Tool aria-label="Increase indent" $min={24}>
							<IndentIcon right />
						</Tool>
					</ToolRow>
				</Stack>
			</Group>
			<Group $pad={12}>
				<Stack $width={114}>
					<ToolRow>
						<Tool $gap={6}>
							<WrapIcon />
							Wrap Text
							<Chevron />
						</Tool>
					</ToolRow>
					<ToolRow>
						<Tool $gap={6}>
							<MergeIcon />
							Merge &amp; Center
							<Chevron />
						</Tool>
					</ToolRow>
				</Stack>
			</Group>
			<Group>
				<Stack $width={155}>
					<ToolRow>
						<SelectBox $width={155}>
							<select aria-label="Number format">
								<option>General</option>
							</select>
							<Chevron />
						</SelectBox>
					</ToolRow>
					<ToolRow>
						<Tool aria-label="Currency" $min={36} $gap={9}>
							<Glyph $size={18}>$</Glyph>
							<Chevron />
						</Tool>
						<Tool aria-label="Percent">
							<Glyph $size={16}>%</Glyph>
						</Tool>
						<Tool aria-label="Comma style">
							<CommaIcon />
						</Tool>
						<Rule />
						<Tool aria-label="Increase decimal">
							<DecimalIcon />
						</Tool>
						<Tool aria-label="Decrease decimal">
							<DecimalIcon right />
						</Tool>
					</ToolRow>
				</Stack>
			</Group>
			<StylesGroup>
				<BigTool $width={76}>
					<BigIcon $shift={4}>
						<ConditionalIcon />
						<Chevron />
					</BigIcon>
					Conditional
					<br />
					Formatting
				</BigTool>
				<BigTool $width={44}>
					<BigIcon>
						<TableFormatIcon />
						<Chevron />
					</BigIcon>
					Format
					<br />
					as Table
				</BigTool>
				<Gallery>
					<GalleryGrid>
						{cellStyles.map(([name, serif], i) => (
							<StyleName key={i} $serif={serif}>
								{name}
							</StyleName>
						))}
					</GalleryGrid>
					<Svg w={6} h={8} strokeWidth="1.5">
						<path d="M1.500 1 4.500 4l-3 3" />
					</Svg>
				</Gallery>
			</StylesGroup>
			<Group>
				<BigTool $width={50}>
					<BigIcon>
						<InsertIcon />
						<Chevron />
					</BigIcon>
					Insert
				</BigTool>
				<BigTool $width={50}>
					<BigIcon>
						<DeleteIcon />
						<Chevron />
					</BigIcon>
					Delete
				</BigTool>
				<BigTool $width={50}>
					<BigIcon>
						<CellFormatIcon />
						<Chevron />
					</BigIcon>
					Format
				</BigTool>
			</Group>
			<Group>
				<SmallTools>
					<SmallTool>
						<SigmaIcon />
						AutoSum
						<Chevron />
					</SmallTool>
					<SmallTool>
						<FillDownIcon />
						Fill
						<Chevron />
					</SmallTool>
					<SmallTool>
						<EraserIcon />
						Clear
						<Chevron />
					</SmallTool>
				</SmallTools>
				<BigTool $width={50}>
					<BigIcon $shift={8}>
						<SortFilterIcon />
						<Chevron />
					</BigIcon>
					Sort &amp;
					<br />
					Filter
				</BigTool>
				<BigTool $width={50}>
					<BigIcon>
						<FindIcon />
						<Chevron />
					</BigIcon>
					Find &amp;
					<br />
					Select
				</BigTool>
			</Group>
			<Group>
				<BigTool $width={44}>
					<BigIcon>
						<BoltIcon />
					</BigIcon>
					Analyze
					<br />
					Data
				</BigTool>
			</Group>
			<Group>
				<BigTool $width={60} $muted>
					<BigIcon>
						<SensitivityIcon />
						<Chevron color="#aaa" />
					</BigIcon>
					Sensitivity
				</BigTool>
			</Group>
		</Groups>
	</RibbonPanel>
);

const App = () => (
	<Page>
		<GlobalStyle />
		<TitleBar>
			<QuickAccess>
				<AutoSave>
					AutoSave
					<Toggle>
						<input type="checkbox" />
						OFF
					</Toggle>
				</AutoSave>
				<QuickButton aria-label="Home">
					<HomeIcon />
				</QuickButton>
				<QuickButton aria-label="Save">
					<SaveIcon />
				</QuickButton>
				<QuickButton aria-label="Save as">
					<SaveAsIcon />
				</QuickButton>
				<QuickButton aria-label="Undo">
					<UndoIcon />
					<Chevron color="#fff" />
				</QuickButton>
				<QuickButton aria-label="Customize toolbar">
					<CustomizeIcon />
				</QuickButton>
			</QuickAccess>
			<DocTitle>
				<FileIcon />
				2.0 Mixed Use Development Model
				<Chevron color="#5f9c78" />
			</DocTitle>
			<TitleActions>
				<QuickButton aria-label="Search">
					<SearchIcon />
				</QuickButton>
				<QuickButton aria-label="Presence">
					<PresenceIcon />
				</QuickButton>
			</TitleActions>
		</TitleBar>
		<Ribbon />
		<FormulaBar>
			<NameBox>
				<input aria-label="Name box" defaultValue="F28" />
				<Svg w={8} h={18} stroke="none" fill="#555">
					<path d="M4 0 7.200 6.500H.8ZM4 18 .8 11.500h6.400Z" />
				</Svg>
			</NameBox>
			<FormulaTools>
				<Svg w={11} h={11} stroke="#c4c4c4" strokeWidth="2">
					<path d="m1 1 9 9M10 1l-9 9" />
				</Svg>
				<Svg w={14} h={11} stroke="#c4c4c4" strokeWidth="2.4">
					<path d="m1 5.500 4 4L13 1" />
				</Svg>
				<Glyph $italic $size={16} $font="'Liberation Serif', serif">
					fx
				</Glyph>
			</FormulaTools>
			<FormulaInput aria-label="Formula" />
			<ExpandButton aria-label="Expand formula bar">▼</ExpandButton>
		</FormulaBar>
		<SheetArea>
			<SheetGrid />
			<ProfitChart />
			<EquityChart />
		</SheetArea>
		<SheetBar>
			<NavArrows>
				<Svg w={8} h={10} stroke="none" fill="#555">
					<path d="M7.500 0v10L.5 5Z" />
				</Svg>
				<Svg w={8} h={10} stroke="none" fill="#555">
					<path d="M.5 0v10l7-5Z" />
				</Svg>
			</NavArrows>
			{sheetTabs.map(([name, kind]) => (
				<SheetTab key={name} $kind={kind}>
					{kind === 'fade' || kind === 'color' ? (
						<ColorTab $fade={kind === 'fade'}>{name}</ColorTab>
					) : (
						name
					)}
				</SheetTab>
			))}
			<AddTab aria-label="Add sheet">+</AddTab>
		</SheetBar>
		<StatusBar>
			<StatusText>Ready</StatusText>
			<ViewButton aria-label="Normal view" $on>
				<GridViewIcon />
			</ViewButton>
			<ViewButton aria-label="Page layout view">
				<PageViewIcon />
			</ViewButton>
			<ViewButton aria-label="Page break view">
				<BreakViewIcon />
			</ViewButton>
			<Zoom>
				<span>−</span>
				<input type="range" aria-label="Zoom" min="10" max="170" defaultValue="82" />
				<span>+</span>
			</Zoom>
			<ZoomValue>90%</ZoomValue>
		</StatusBar>
	</Page>
);

export default App;
